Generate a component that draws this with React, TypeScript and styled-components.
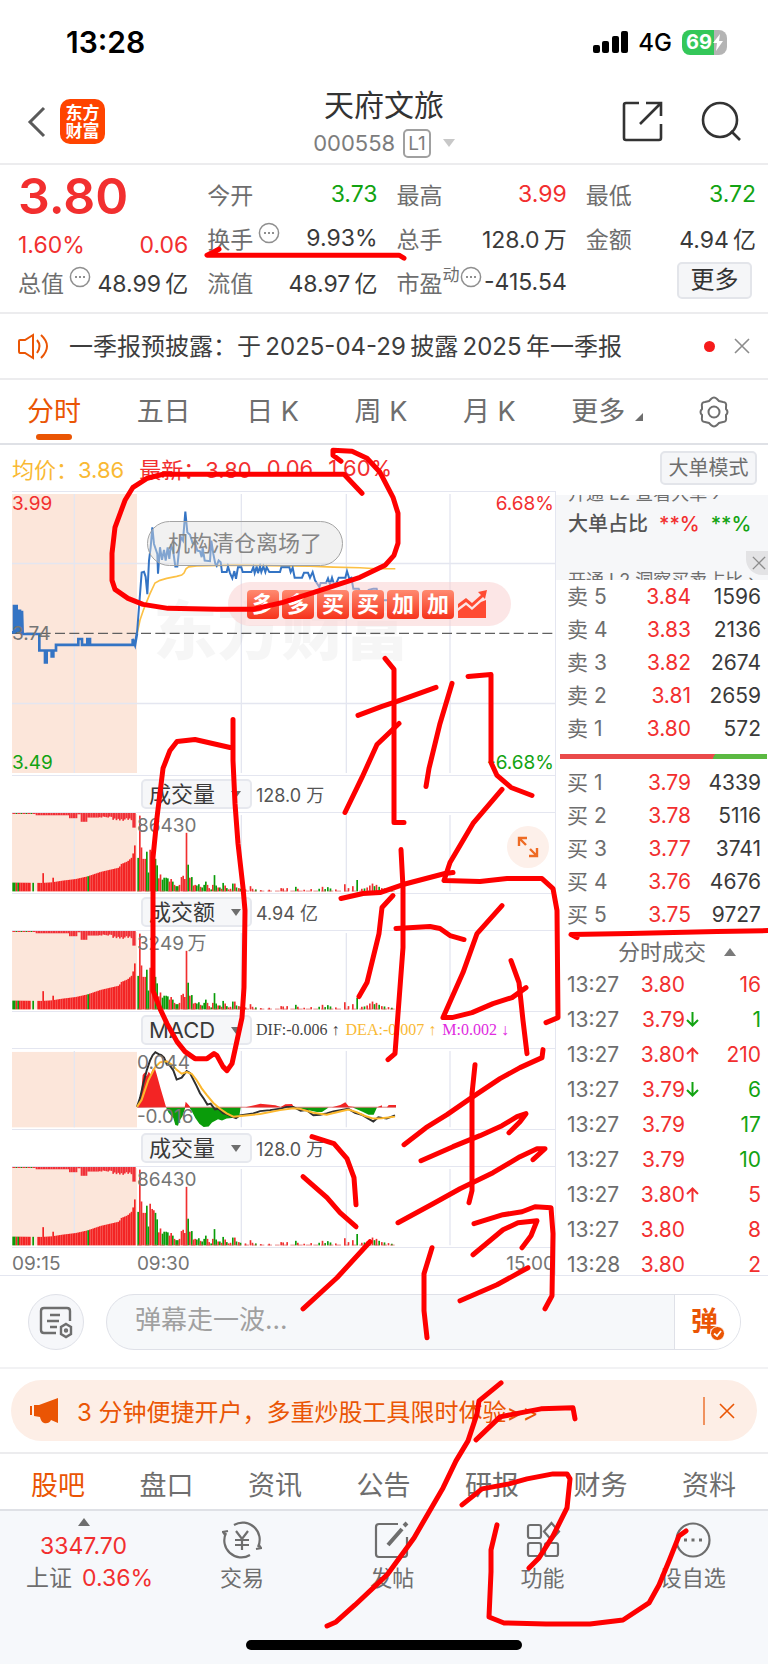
import React from "react";
import styled, { createGlobalStyle } from "styled-components";

const RED = "#f22f2f";
const GREEN = "#12a312";
const ORANGE = "#ea5504";
const GRID = "#e4e6f0";

type Tone = "red" | "green" | "dark" | "gray";
const tones: Record<Tone, string> = { red: RED, green: GREEN, dark: "#3a3a3a", gray: "#6e6e6e" };

const Global = createGlobalStyle`
  * { box-sizing: border-box; }
  body { margin: 0; background: #fff; }
  body, button, input, select {
    font-family: Inter, "Noto Sans CJK SC", sans-serif;
    color: #6e6e6e;
  }
  button { border: 0; padding: 0; margin: 0; background: none; cursor: pointer; }
  a { color: inherit; text-decoration: none; }
  svg { display: block; }
`;

const Page = styled.div`
  position: relative;
  width: 100%;
  overflow: hidden;
  background: #fff;
`;

/* ---------- status bar ---------- */
const StatusBar = styled.div`
  display: flex;
  justify-content: space-between;
  align-items: center;
  height: 84px;
  padding: 0 41px 0 66px;
  color: #000;
`;
const Clock = styled.time`
  font-size: 30px;
  font-weight: 600;
`;
const StatusIcons = styled.div`
  display: flex;
  align-items: center;
  gap: 10px;
  font-size: 24px;
  font-weight: 500;
`;
const Battery = styled.div`
  display: flex;
  align-items: center;
  justify-content: center;
  gap: 1px;
  width: 45px;
  height: 25px;
  border-radius: 8px;
  background: linear-gradient(to right, #34c759 71%, #b4b4b4 71%);
  color: #fff;
  font-size: 20px;
  font-weight: 700;
`;

/* ---------- title bar ---------- */
const TitleBar = styled.header`
  display: grid;
  grid-template-columns: 1fr auto 1fr;
  align-items: center;
  height: 81px;
  padding: 0 26px 4px;
  border-bottom: 2px solid #ececee;
`;
const TitleLeft = styled.div`
  display: flex;
  align-items: center;
  gap: 13px;
`;
const TitleRight = styled.div`
  display: flex;
  justify-content: flex-end;
  gap: 38px;
`;
const Logo = styled.a`
  display: flex;
  align-items: center;
  justify-content: center;
  width: 45px;
  height: 45px;
  border-radius: 10px;
  background: #ff4400;
  color: #fff;
  font-size: 17px;
  line-height: 18px;
  font-weight: 700;
  text-align: center;
`;
const TitleCenter = styled.div`
  display: flex;
  flex-direction: column;
  align-items: center;
  gap: 3px;
`;
const StockName = styled.h1`
  margin: 0;
  font-size: 30px;
  line-height: 40px;
  font-weight: 400;
  color: #333;
`;
const StockCode = styled.div`
  display: flex;
  align-items: center;
  gap: 8px;
  font-size: 22px;
  line-height: 30px;
  color: #7d7d7d;
`;
const LevelTag = styled.span`
  padding: 0 3px;
  border: 2px solid #a0a0a0;
  border-radius: 5px;
  font-size: 19px;
  line-height: 25px;
`;
const Caret = styled.span<{ $up?: boolean; $tone?: string }>`
  width: 0;
  height: 0;
  margin-left: ${(p) => (p.$up ? 0 : 4)}px;
  border: 6px solid transparent;
  ${(p) => (p.$up ? "border-top-width: 0; border-bottom" : "border-bottom-width: 0; border-top")}: 8px solid ${(p) => p.$tone || "#c8c8c8"};
`;

/* ---------- quote ---------- */
const Quote = styled.section`
  display: grid;
  grid-template-columns: repeat(4, 1fr);
  column-gap: 19px;
  padding: 7px 12px 8px 18px;
  border-bottom: 2px solid #ececee;
`;
const QuoteCol = styled.div`
  display: flex;
  flex-direction: column;
`;
const BigPrice = styled.div`
  height: 57px;
  font-size: 50px;
  line-height: 48px;
  font-weight: 600;
  color: ${RED};
`;
const QuoteRow = styled.div<{ $h?: number }>`
  display: flex;
  align-items: center;
  justify-content: space-between;
  height: ${(p) => p.$h || 44}px;
  font-size: 23px;
  white-space: nowrap;
`;
const QuoteLabel = styled.span<{ $gap?: number }>`
  display: flex;
  align-items: center;
  gap: ${(p) => p.$gap ?? 5}px;
`;
const Small = styled.sup`
  align-self: flex-start;
  font-size: 17px;
  line-height: 20px;
`;
const Info = styled.button`
  align-self: flex-start;
  padding-top: 1px;
`;
const Value = styled.span<{ $tone?: Tone }>`
  color: ${(p) => tones[p.$tone || "dark"]};
`;
const MoreButton = styled.button`
  width: 75px;
  height: 37px;
  margin: 0 4px 4px auto;
  border: 2px solid #e3e5ea;
  border-radius: 5px;
  background: #f5f6f8;
  font-size: 24px;
  line-height: 32px;
  color: #333;
`;

/* ---------- notice ---------- */
const Notice = styled.section`
  display: flex;
  align-items: center;
  height: 66px;
  padding: 0 18px 0 17px;
  border-bottom: 2px solid #ececee;
`;
const NoticeText = styled.a`
  flex: 1;
  margin: 0 0 3px 18px;
  font-size: 24px;
  color: #3d3d3d;
  white-space: nowrap;
`;
const Dot = styled.span`
  width: 11px;
  height: 11px;
  margin-right: 19px;
  border-radius: 50%;
  background: #f61b1b;
`;

/* ---------- period tabs ---------- */
const PeriodTabs = styled.nav`
  display: flex;
  justify-content: space-between;
  height: 65px;
  padding: 0 39px 0 27px;
  border-bottom: 2px solid #dfe1e6;
`;
const PeriodTab = styled.button<{ $active?: boolean }>`
  display: flex;
  flex-direction: column;
  align-items: center;
  padding-top: 12px;
  font-size: 27px;
  line-height: 40px;
  color: ${(p) => (p.$active ? ORANGE : "#6e6e6e")};
  &::after {
    content: "";
    width: 36px;
    height: 6px;
    margin-top: 2px;
    border-radius: 3px;
    background: ${(p) => (p.$active ? ORANGE : "transparent")};
  }
`;
const Corner = styled.span`
  display: inline-block;
  margin-left: 10px;
  border: 4px solid transparent;
  border-right-color: #6e6e6e;
  border-bottom-color: #6e6e6e;
`;

/* ---------- market area ---------- */
const Legend = styled.div`
  display: flex;
  align-items: center;
  height: 46px;
  padding: 0 11px 0 12px;
  font-size: 22px;
  white-space: pre;
`;
const LegendItem = styled.span<{ $color: string }>`
  margin-right: 15px;
  color: ${(p) => p.$color};
`;
const ModeButton = styled.button`
  margin-left: auto;
  width: 97px;
  height: 34px;
  border: 2px solid #e3e5ea;
  border-radius: 5px;
  background: #f5f6f8;
  font-size: 20px;
  line-height: 28px;
`;
const Market = styled.div`
  display: grid;
  grid-template-columns: minmax(0, 1fr) 212px;
`;
const Charts = styled.div`
  padding-left: 12px;
  border-bottom: 1px solid ${GRID};
`;
const Plot = styled.div<{ $h: number }>`
  position: relative;
  height: ${(p) => p.$h}px;
  border: 0 solid ${GRID};
  border-width: 1px 1px 1px 0;
  & > svg { width: 100%; height: 100%; }
`;
const PlotLabel = styled.span<{ $top: string; $left?: string; $right?: string; $color?: string }>`
  position: absolute;
  top: ${(p) => p.$top};
  left: ${(p) => p.$left || "auto"};
  right: ${(p) => p.$right || "auto"};
  font-size: 19px;
  line-height: 22px;
  color: ${(p) => p.$color || "#757575"};
`;
const Watermark = styled.span`
  position: absolute;
  left: 26%;
  top: 94px;
  font-size: 64px;
  line-height: 90px;
  font-weight: 900;
  color: rgba(0, 0, 0, 0.035);
  white-space: nowrap;
`;
const Bullet = styled.span`
  position: absolute;
  left: 135px;
  top: 29px;
  width: 196px;
  height: 45px;
  border: 1px solid #a4a4a4;
  border-radius: 23px;
  background: rgba(225, 225, 225, 0.45);
  color: #858585;
  font-size: 22px;
  line-height: 43px;
  text-align: center;
`;
const Cheer = styled.span`
  position: absolute;
  left: 216px;
  top: 90px;
  display: flex;
  align-items: center;
  gap: 3px;
  height: 44px;
  padding: 0 23px 0 19px;
  border-radius: 22px;
  background: rgba(250, 205, 205, 0.5);
`;
const CheerTile = styled.b`
  width: 32px;
  height: 29px;
  border-radius: 4px;
  background: linear-gradient(#ff8a70, #f6321a);
  color: #fff;
  font-size: 22px;
  line-height: 28px;
  text-align: center;
`;
const ExpandButton = styled.button`
  position: absolute;
  right: 6px;
  top: 13px;
  display: flex;
  align-items: center;
  justify-content: center;
  width: 42px;
  height: 42px;
  border-radius: 50%;
  background: #fdf0ea;
`;
const IndicatorRow = styled.div`
  display: flex;
  align-items: center;
  gap: 4px;
  height: 36px;
  padding-left: 129px;
  border-right: 1px solid ${GRID};
  font-size: 18px;
  white-space: nowrap;
  color: #555;
`;
const SelectBox = styled.label`
  display: flex;
  align-items: center;
  width: 111px;
  height: 30px;
  padding-right: 9px;
  border: 2px solid #e6e8ee;
  border-radius: 5px;
  background: #f6f7f9;
`;
const Select = styled.select`
  flex: 1;
  min-width: 0;
  height: 26px;
  padding: 0 0 0 6px;
  border: 0;
  background: none;
  appearance: none;
  font-size: 22px;
  line-height: 26px;
  color: #3a3a3a;
`;
const SelectCaret = styled.span`
  border: 5px solid transparent;
  border-bottom-width: 0;
  border-top: 7px solid #6e6e6e;
`;
const Macd = styled.span<{ $color: string }>`
  margin-right: 2px;
  font-family: "Liberation Serif", serif;
  font-size: 16px;
  color: ${(p) => p.$color};
`;
const Axis = styled.div`
  display: flex;
  height: 27px;
  border-right: 1px solid ${GRID};
  font-size: 19px;
  line-height: 32px;
  color: #757575;
`;
const AxisStart = styled.span`
  width: 23%;
`;
const AxisEnd = styled.span`
  margin-left: auto;
`;

/* ---------- order book ---------- */
const Side = styled.aside`
  padding: 4px 0 0;
  border-bottom: 1px solid ${GRID};
`;
const Promo = styled.div`
  position: relative;
  display: flex;
  flex-direction: column;
  height: 85px;
  padding-left: 12px;
  overflow: hidden;
  background: #f6f7f9;
`;
const PromoClip = styled.a<{ $bottom?: boolean }>`
  display: flex;
  align-items: ${(p) => (p.$bottom ? "flex-start" : "flex-end")};
  height: 9px;
  overflow: hidden;
  font-size: 18px;
  line-height: 20px;
  white-space: nowrap;
`;
const PromoTitle = styled.div`
  display: flex;
  gap: 11px;
  height: 40px;
  margin-bottom: auto;
  font-size: 20px;
  line-height: 40px;
  font-weight: 500;
  color: #555;
`;
const PromoClose = styled.button`
  position: absolute;
  right: 0;
  top: 56px;
  width: 22px;
  height: 24px;
  padding-left: 6px;
  border-radius: 0 0 0 16px;
  background: #e3e3e5;
`;
const Book = styled.table<{ $row: number; $label: number }>`
  width: 100%;
  border-collapse: collapse;
  table-layout: fixed;
  font-size: 21px;
  td, th {
    height: ${(p) => p.$row}px;
    padding: 0;
    font-weight: 400;
    line-height: 24px;
    white-space: nowrap;
  }
  th { width: ${(p) => p.$label}px; padding-left: 11px; text-align: left; }
  td:nth-child(2) { width: 58px; text-align: right; }
  td:last-child { padding-right: 7px; text-align: right; }
`;
const Trades = styled(Book)`
  margin-bottom: -7px;
`;
const BalanceBar = styled.div`
  height: 5px;
  margin: 9px 1px 7px 4px;
  background: linear-gradient(115deg, #ea4a4a 74%, #5bb942 74%);
`;
const TradesTitle = styled.button`
  display: flex;
  align-items: center;
  gap: 18px;
  width: 100%;
  height: 36px;
  padding: 6px 0 0 62px;
  font-size: 22px;
  line-height: 30px;
`;
const Tick = styled.span<{ $tone: Tone }>`
  display: inline-block;
  width: 14px;
  margin-right: -14px;
  color: ${(p) => tones[p.$tone]};
  svg { display: inline-block; }
`;

/* ---------- comment box ---------- */
const CommentBar = styled.form`
  display: flex;
  align-items: center;
  gap: 22px;
  height: 93px;
  padding: 0 27px 0 28px;
  border-bottom: 2px solid #f2f2f4;
`;
const RoundButton = styled.button`
  display: flex;
  align-items: center;
  justify-content: center;
  width: 56px;
  height: 56px;
  border: 1px solid #dfe1e8;
  border-radius: 50%;
  background: #f6f7fa;
`;
const CommentField = styled.div`
  display: flex;
  flex: 1;
  height: 56px;
  border: 1px solid #dfe1e8;
  border-radius: 28px;
  background: #f6f8fa;
  overflow: hidden;
`;
const CommentInput = styled.input`
  flex: 1;
  min-width: 0;
  padding: 0 28px 4px;
  border: 0;
  background: none;
  font-size: 26px;
  &::placeholder { color: #a0a0a0; opacity: 1; }
`;
const BulletToggle = styled.button`
  position: relative;
  width: 66px;
  border-left: 1px solid #dfe1e8;
  background: #fff;
  color: ${ORANGE};
  font-size: 27px;
  font-weight: 700;
  line-height: 50px;
  text-align: left;
  padding-left: 16px;
  svg { position: absolute; left: 35px; top: 31px; }
`;

/* ---------- banner ---------- */
const BannerWrap = styled.section`
  padding: 11px;
  border-bottom: 2px solid #ececee;
`;
const Banner = styled.div`
  display: flex;
  align-items: center;
  height: 61px;
  padding: 0 22px 0 18px;
  border-radius: 31px;
  background: #fdeee6;
  color: ${ORANGE};
`;
const BannerText = styled.a`
  flex: 1;
  margin-left: 18px;
  font-size: 24px;
  white-space: nowrap;
`;
const BannerClose = styled.button`
  padding: 6px 0 6px 14px;
  border-left: 2px solid #f0925f;
`;

/* ---------- section tabs and bottom bar ---------- */
const SectionTabs = styled.nav`
  display: flex;
  justify-content: space-between;
  height: 57px;
  padding: 0 32px 0 31px;
  border-bottom: 2px solid #dfe1e6;
`;
const SectionTab = styled.a<{ $active?: boolean }>`
  padding-top: 12px;
  font-size: 27px;
  line-height: 40px;
  color: ${(p) => (p.$active ? ORANGE : "#6e6e6e")};
`;
const BottomBar = styled.footer`
  padding: 7px 0 15px;
  background: #f6f8fb;
`;
const BottomItems = styled.div`
  display: grid;
  grid-template-columns: 167px repeat(4, 1fr);
  height: 122px;
`;
const IndexCell = styled.a`
  display: flex;
  flex-direction: column;
  align-items: center;
  gap: 8px;
  font-size: 23px;
  line-height: 24px;
`;
const IndexLine = styled.span`
  display: flex;
  gap: 10px;
  padding-left: 12px;
`;
const NavButton = styled.button`
  display: flex;
  flex-direction: column;
  align-items: center;
  gap: 3px;
  padding-top: 3px;
  font-size: 22px;
  line-height: 32px;
`;
const HomeBar = styled.div`
  width: 36%;
  height: 10px;
  margin: 0 auto;
  border-radius: 5px;
  background: #000;
`;

const Doodle = styled.svg`
  position: absolute;
  inset: 0;
  width: 100%;
  height: 100%;
  pointer-events: none;
`;

/* ---------- icons ---------- */
const Cross = ({ size = 16, color = "#8c8c8c" }: { size?: number; color?: string }) => (
  <svg width={size} height={size} viewBox="0 0 16 16" fill="none" stroke={color} strokeWidth="1.6">
    <path d="M1 1L15 15M15 1L1 15" />
  </svg>
);
const MoreInfo = () => (
  <Info aria-label="说明">
    <svg width="22" height="22" viewBox="0 0 22 22" fill="none" stroke="#8f8f8f" strokeWidth="1.5">
      <circle cx="11" cy="11" r="9.6" />
      <path d="M6 11h2M10 11h2M14 11h2" strokeWidth="2" />
    </svg>
  </Info>
);

/* ---------- chart drawings ---------- */
const VLines = ({ h }: { h: number }) => (
  <path d={`M187 6V${h}M688 6V${h}M1003 6V${h}M1314 6V${h}`} stroke={GRID} strokeWidth="4" fill="none" />
);

const PRE_LINE =
  "0,424 6,424 6,345 14,345 14,422 18,422 18,359 24,359 24,424 30,424 30,359 32,429 82,429 82,479 99,479 99,515 104,515 104,479 119,479 119,497 124,497 124,479 132,479 132,462 199,462 199,444 210,444 210,462 226,462 226,444 234,444 234,462 362,462 362,444 369,462 375,427";
const PRICE_LINE =
  "375,427 389,243 396,241 401,257 406,309 411,207 416,167 421,107 426,157 436,187 438,247 444,167 450,205 456,175 461,207 467,167 472,202 477,157 484,182 490,225 496,225 502,167 507,137 513,147 520,59 526,122 534,129 542,155 550,157 556,177 564,179 569,197 572,167 578,207 594,209 598,147 604,187 610,217 614,223 620,207 626,212 630,242 644,242 648,225 654,245 661,261 667,239 672,262 678,227 688,227 692,242 718,242 724,227 728,245 734,225 738,245 744,225 748,242 754,225 760,242 764,227 772,242 804,242 808,227 832,227 836,242 842,229 848,259 870,259 876,244 888,244 894,259 902,242 909,267 922,287 926,275 942,275 948,261 954,279 960,259 966,279 974,273 980,259 1000,259 1005,239 1012,262 1018,259 1024,292 1040,292 1048,310 1062,308 1070,296 1084,292 1094,292 1100,318 1110,327 1134,327";
const AVG_LINE =
  "375,429 384,387 394,357 404,332 414,307 429,275 444,267 464,261 494,255 509,251 516,245 522,232 530,226 554,223 664,221 814,223 894,224 964,227 1044,229 1094,232 1150,232";

const PriceDrawing = () => (
  <svg viewBox="0 0 1629 855" preserveAspectRatio="none" fill="none">
    <rect x="0" y="6" width="375" height="843" fill="#fce6da" />
    <path d="M0 216H1629M0 639H1629" stroke={GRID} strokeWidth="4" />
    <VLines h={849} />
    <path d="M0 427H1629" stroke="#606060" strokeWidth="4" strokeDasharray="30 13" />
    <polyline points={AVG_LINE} stroke="#fcc044" strokeWidth="5" />
    <polyline points={PRE_LINE} stroke="#3474c4" strokeWidth="8" />
    <polyline points={PRICE_LINE} stroke="#3474c4" strokeWidth="6" />
  </svg>
);

// [x, height, colour] of the bars traded after the open
const OPEN_BARS: [number, number, string][] = [
  [377, 103, "g"], [382, 233, "r"], [387, 135, "r"], [392, 100, "r"], [398, 100, "r"], [403, 122, "g"], [408, 58, "g"],
  [413, 128, "r"], [419, 112, "r"], [424, 108, "r"], [429, 100, "g"], [434, 80, "g"], [439, 40, "r"], [444, 52, "r"],
  [450, 36, "g"], [455, 42, "g"], [461, 42, "g"], [466, 40, "g"], [471, 30, "r"], [476, 38, "r"], [481, 30, "g"],
  [486, 20, "r"], [491, 16, "g"], [496, 16, "g"], [501, 20, "r"], [507, 44, "r"], [512, 48, "r"], [517, 38, "r"],
  [522, 180, "r"], [527, 82, "g"], [532, 42, "r"], [538, 44, "g"], [543, 18, "r"], [548, 20, "r"], [553, 18, "g"],
  [559, 22, "g"], [564, 14, "r"], [569, 12, "g"], [575, 20, "g"], [580, 30, "g"], [585, 20, "r"], [590, 10, "r"],
  [596, 6, "g"], [601, 20, "r"], [606, 50, "g"], [611, 18, "g"], [617, 12, "r"], [622, 12, "g"], [627, 8, "r"],
  [632, 26, "g"], [638, 18, "r"], [643, 10, "g"], [648, 6, "r"], [654, 8, "r"], [661, 24, "g"], [667, 24, "r"],
  [672, 12, "g"], [679, 10, "r"], [684, 8, "g"], [699, 6, "r"], [714, 16, "r"], [720, 8, "r"], [730, 6, "g"],
  [745, 4, "r"], [770, 5, "r"], [806, 10, "r"], [812, 9, "r"], [824, 10, "r"], [850, 14, "g"], [856, 8, "r"],
  [875, 5, "r"], [896, 7, "r"], [920, 8, "g"], [930, 14, "r"], [938, 7, "g"], [946, 13, "g"], [954, 9, "g"],
  [970, 6, "r"], [997, 22, "r"], [1008, 10, "r"], [1021, 16, "r"], [1034, 35, "g"], [1048, 8, "r"], [1056, 9, "g"],
  [1064, 12, "r"], [1072, 18, "r"], [1080, 24, "r"], [1086, 16, "g"], [1092, 20, "r"], [1100, 14, "g"],
  [1108, 10, "r"], [1116, 9, "g"], [1128, 7, "r"], [1138, 5, "g"],
];
const PRE_SHAPE: [number, number][] = [
  [0, 27], [90, 26], [120, 28], [150, 33], [190, 38], [225, 46], [265, 60], [320, 73], [326, 84], [345, 92], [360, 106],
  [366, 138], [372, 158],
];
const preHeight = (x: number) => {
  for (let i = 1; i < PRE_SHAPE.length; i++) {
    const [x1, h1] = PRE_SHAPE[i];
    const [x0, h0] = PRE_SHAPE[i - 1];
    if (x <= x1) return h0 + ((h1 - h0) * (x - x0)) / (x1 - x0);
  }
  return 158;
};
const topHeight = (x: number) => {
  if (x < 72) return x % 24 ? 3 : 6;
  if (x < 168) return 5 + (x % 5);
  if (x < 194) return 16;
  if (x < 206) return 4;
  if (x < 226) return 27;
  if (x < 262) return 14;
  if (x < 300) return 11 + (x % 4);
  if (x < 362) return 16 + (x % 9);
  return 45;
};
const PRE_XS = Array.from({ length: 74 }, (_, i) => 2 + i * 5);

const VolumeDrawing = () => (
  <svg viewBox="0 0 1629 246" preserveAspectRatio="none">
    <rect x="0" y="3" width="375" height="238" fill="#fce6da" />
    <VLines h={241} />
    {PRE_XS.filter((x) => x < 54 || x > 72 || x === 62).map((x) => {
      const green = x < 22 ? x % 3 !== 0 : x === 62 || x === 72 || x === 227;
      const h = x > 90 && x < 95 ? 56 : x > 118 && x < 124 ? 42 : preHeight(x);
      return <rect key={x} x={x - 1} y={241 - h} width="5" height={h} fill={green ? "#0a9c0a" : "#f32424"} />;
    })}
    {PRE_XS.map((x) => (
      <rect key={x} x={x - 1} y="0" width="5" height={topHeight(x)} fill={x < 72 && x % 3 === 0 ? "#0a9c0a" : "#f03038"} />
    ))}
    {OPEN_BARS.map(([x, h, c]) => (
      <rect key={x} x={x - 1} y={241 - h} width="5" height={h} fill={c === "g" ? "#0a9c0a" : "#f03030"} />
    ))}
    <path d="M375 240H1150" stroke="#e05050" strokeWidth="2" strokeDasharray="14 9" />
  </svg>
);

const MacdDrawing = () => (
  <svg viewBox="0 0 1629 246" preserveAspectRatio="none" fill="none">
    <rect x="0" y="9" width="375" height="232" fill="#fce6da" />
    <VLines h={241} />
    <path
      d="M378 180L386 150L392 80L398 72L404 84L410 70L416 78L422 62L428 58L434 78L440 100L446 122L454 150L462 178Z M518 180L521 162L530 172L536 180Z M700 179L730 172L745 168L760 170L790 173L806 178L820 170L840 169L846 179Z M960 179L985 172L1000 164L1010 176L1035 179Z M1095 179L1110 173V179H1125L1130 172H1152V179Z"
      fill="#f32424"
    />
    <path
      d="M462 180H520L512 205L502 222L498 236L490 234L484 212L470 196Z M532 180H686L682 206L660 212L644 214L630 220L618 216L600 226L590 238L575 240L562 230L550 212L540 192Z M850 180H950L930 194L915 194L890 188Z M1022 180H1095L1085 202L1070 202L1050 192Z"
      fill="#0a9c0a"
    />
    <path d="M375 179H1152" stroke="#d04040" strokeWidth="2" />
    <polyline
      points="375,178 384,151 394,106 404,66 414,36 422,19 430,10 440,16 448,19 456,26 464,46 474,51 484,66 494,94 509,88 524,68 534,74 544,94 554,114 564,136 576,154 586,171 596,168 609,186 619,184 634,198 644,200 654,206 672,213 684,204 724,198 744,191 774,188 804,184 824,178 844,178 866,190 884,188 904,204 924,202 944,198 964,192 1009,184 1029,196 1049,202 1069,214 1084,223 1099,210 1124,214 1149,204"
      stroke="#2f2f2f"
      strokeWidth="6"
    />
    <polyline
      points="375,178 389,156 409,96 429,56 444,41 464,38 479,48 494,64 509,76 524,71 539,76 554,96 569,121 584,141 604,166 624,184 644,198 664,208 694,205 744,200 804,188 844,182 864,184 904,196 944,202 984,192 1009,186 1034,194 1059,206 1084,214 1109,213 1149,208"
      stroke="#fcb82e"
      strokeWidth="6"
    />
  </svg>
);

/* ---------- data ---------- */
const asks = [["卖 5", "3.84", "1596"], ["卖 4", "3.83", "2136"], ["卖 3", "3.82", "2674"], ["卖 2", "3.81", "2659"], ["卖 1", "3.80", "572"]];
const bids = [["买 1", "3.79", "4339"], ["买 2", "3.78", "5116"], ["买 3", "3.77", "3741"], ["买 4", "3.76", "4676"], ["买 5", "3.75", "9727"]];
const trades: [string, string, "" | "up" | "down", string, Tone][] = [
  ["13:27", "3.80", "", "16", "red"],
  ["13:27", "3.79", "down", "1", "green"],
  ["13:27", "3.80", "up", "210", "red"],
  ["13:27", "3.79", "down", "6", "green"],
  ["13:27", "3.79", "", "17", "green"],
  ["13:27", "3.79", "", "10", "green"],
  ["13:27", "3.80", "up", "5", "red"],
  ["13:27", "3.80", "", "8", "red"],
  ["13:28", "3.80", "", "2", "red"],
];

const STROKES = [
  "M219 249L207 255H399L404 258",
  "M341 461L333 455V450L352 451L367 458L380 472L393 497L398 513V543L394 555L385 565L360 577L317 591L283 602L253 609H217L168 608L143 604L128 598L115 589L112 580V553L115 527L125 500L133 487L147 478L163 474H344L362 493",
  "M233 719V760L235 803L238 843L243 887L245 910L244 987L242 1017L237 1040L232 1063L227 1070L223 1066L217 1055L214 1053L207 1058H195L185 1051L177 1041L167 1023L160 1008L153 990V857L157 817L163 768L170 750L177 741L195 739L230 747",
  "M385 658L394 669V822H404",
  "M358 715L382 706L397 701L436 687",
  "M399 723L377 744L362 777L345 812",
  "M452 683L440 723L429 768L426 786",
  "M468 676L491 674V762L497 775L511 787L532 795",
  "M502 789L473 823L450 862L444 880L480 881L507 878H542L553 888L557 910L558 1017L546 1022",
  "M341 898L363 893L380 892L403 884L445 873L453 872",
  "M401 849L403 887V947L395 1053L388 1059",
  "M393 895L382 907L379 933L367 982L359 996",
  "M396 928L430 926L440 928L450 935L464 939",
  "M502 905L477 933L463 972L443 1017H452L472 1012L493 1003L512 997L526 987",
  "M511 960L519 982L523 1020L527 1053",
  "M312 1136L334 1143L347 1158L354 1177L356 1204",
  "M303 1176L327 1197L340 1212L356 1226",
  "M370 1241L337 1277L303 1308",
  "M543 1049L542 1057L520 1067L500 1078L473 1096L447 1114L426 1127L404 1144",
  "M475 1064L472 1093V1190L469 1202",
  "M421 1160L453 1146L480 1135L502 1125L517 1116L526 1113L520 1121L509 1132",
  "M398 1222L433 1203L460 1188L493 1172L520 1156L537 1148H545L533 1159",
  "M474 1223L503 1214L522 1211L535 1206L551 1207L553 1233L552 1295L545 1308",
  "M473 1254L503 1229L518 1222L537 1220L531 1235L522 1247",
  "M460 1300L497 1284L528 1267",
  "M432 1247L424 1273V1310L427 1337",
  "M501 1382L479 1400L477 1413L468 1440L456 1460L443 1487L414 1537L387 1574L355 1604L336 1621L327 1625",
  "M476 1439L500 1416L541 1408L573 1407L575 1418",
  "M462 1504L482 1488L509 1483L527 1478L553 1473H567L570 1478L567 1507L553 1535L539 1557L529 1567",
  "M497 1524L491 1549V1571L489 1616L504 1622L546 1623H590L623 1619L649 1602L659 1584L669 1560L679 1535L686 1530",
  "M577 937L571 934L630 933L717 931L768 930",
];

const BookRows = ({ rows, label }: { rows: string[][]; label: string }) => (
  <Book $row={33} $label={77} aria-label={label}>
    <tbody>
      {rows.map(([name, price, amount]) => (
        <tr key={name}>
          <th scope="row">{name}</th>
          <td><Value $tone="red">{price}</Value></td>
          <td><Value>{amount}</Value></td>
        </tr>
      ))}
    </tbody>
  </Book>
);

const Indicator = ({ value, children }: { value: string; children?: React.ReactNode }) => (
  <IndicatorRow>
    <SelectBox>
      <Select defaultValue={value} aria-label="指标">
        <option>成交量</option>
        <option>成交额</option>
        <option>MACD</option>
      </Select>
      <SelectCaret />
    </SelectBox>
    {children}
  </IndicatorRow>
);

export default function App() {
  return (
    <>
      <Global />
      <Page>
        <StatusBar>
          <Clock>13:28</Clock>
          <StatusIcons>
            <svg width="35" height="22" viewBox="0 0 35 22">
              <rect x="0" y="14" width="7" height="8" rx="2" />
              <rect x="9" y="10" width="7" height="12" rx="2" />
              <rect x="19" y="5" width="7" height="17" rx="2" />
              <rect x="28" y="0" width="7" height="22" rx="2" />
            </svg>
            4G
            <Battery>
              69
              <svg width="10" height="17" viewBox="0 0 10 17" fill="#fff"><path d="M7 0L0 9H4L3 17L10 7H6Z" /></svg>
            </Battery>
          </StatusIcons>
        </StatusBar>

        <TitleBar>
          <TitleLeft>
            <button aria-label="返回">
              <svg width="21" height="32" viewBox="0 0 21 32" fill="none" stroke="#5a5a5a" strokeWidth="3"><path d="M18 2L4 16L18 30" /></svg>
            </button>
            <Logo href="#">东方<br />财富</Logo>
          </TitleLeft>
          <TitleCenter>
            <StockName>天府文旅</StockName>
            <StockCode>
              000558<LevelTag>L1</LevelTag><Caret />
            </StockCode>
          </TitleCenter>
          <TitleRight>
            <button aria-label="分享">
              <svg width="41" height="41" viewBox="0 0 41 41" fill="none" stroke="#333" strokeWidth="2.6">
                <path d="M17 2H4Q2 2 2 4V37Q2 39 4 39H37Q39 39 39 37V23M24 2H39V15M39 2L18 23" />
              </svg>
            </button>
            <button aria-label="搜索">
              <svg width="41" height="41" viewBox="0 0 41 41" fill="none" stroke="#333" strokeWidth="2.6">
                <circle cx="19" cy="19" r="17" /><path d="M30 30L39 39" />
              </svg>
            </button>
          </TitleRight>
        </TitleBar>

        <Quote>
          <QuoteCol>
            <BigPrice>3.80</BigPrice>
            <QuoteRow $h={31}><Value $tone="red">1.60%</Value><Value $tone="red">0.06</Value></QuoteRow>
            <QuoteRow><QuoteLabel>总值<MoreInfo /></QuoteLabel><Value>48.99{"\u2009"}亿</Value></QuoteRow>
          </QuoteCol>
          <QuoteCol>
            <QuoteRow>今开<Value $tone="green">3.73</Value></QuoteRow>
            <QuoteRow><QuoteLabel>换手<MoreInfo /></QuoteLabel><Value>9.93%</Value></QuoteRow>
            <QuoteRow>流值<Value>48.97{"\u2009"}亿</Value></QuoteRow>
          </QuoteCol>
          <QuoteCol>
            <QuoteRow>最高<Value $tone="red">3.99</Value></QuoteRow>
            <QuoteRow>总手<Value>128.0{"\u2009"}万</Value></QuoteRow>
            <QuoteRow><QuoteLabel $gap={0}>市盈<Small>动</Small><MoreInfo /></QuoteLabel><Value>-415.54</Value></QuoteRow>
          </QuoteCol>
          <QuoteCol>
            <QuoteRow>最低<Value $tone="green">3.72</Value></QuoteRow>
            <QuoteRow>金额<Value>4.94{"\u2009"}亿</Value></QuoteRow>
            <QuoteRow><MoreButton>更多</MoreButton></QuoteRow>
          </QuoteCol>
        </Quote>

        <Notice>
          <svg width="34" height="27" viewBox="0 0 34 27" fill="none" stroke={ORANGE} strokeWidth="2">
            <path d="M16 2L8 7H3Q2 7 2 8V18Q2 20 3 20H8L16 25Z M20 7Q25 13 20 20 M24 2Q36 13 24 25" />
          </svg>
          <NoticeText href="#">一季报预披露：于{"\u2009"}2025-04-29{"\u2009"}披露{"\u2009"}2025{"\u2009"}年一季报</NoticeText>
          <Dot />
          <button aria-label="关闭公告"><Cross /></button>
        </Notice>

        <PeriodTabs>
          <PeriodTab $active>分时</PeriodTab>
          <PeriodTab>五日</PeriodTab>
          <PeriodTab>日 K</PeriodTab>
          <PeriodTab>周 K</PeriodTab>
          <PeriodTab>月 K</PeriodTab>
          <PeriodTab><span>更多<Corner /></span></PeriodTab>
          <button aria-label="设置">
            <svg width="30" height="32" viewBox="0 0 30 32" fill="none" stroke="#6e6e6e" strokeWidth="2">
              <path d="M12 3Q15 0 18 3L20 5L24 6Q28 6 27 11V13Q30 16 27 19V21Q28 26 24 26L20 27L18 29Q15 32 12 29L10 27L6 26Q2 26 3 21V19Q0 16 3 13V11Q2 6 6 6L10 5Z" />
              <circle cx="15" cy="16" r="5.5" />
            </svg>
          </button>
        </PeriodTabs>

        <Legend>
          <LegendItem $color="#f9b934">均价：3.86</LegendItem>
          <LegendItem $color={RED}>最新：3.80</LegendItem>
          <LegendItem $color={RED}>0.06</LegendItem>
          <LegendItem $color={RED}>1.60%</LegendItem>
          <ModeButton>大单模式</ModeButton>
        </Legend>

        <Market>
          <Charts>
            <Plot $h={285}>
              <Watermark>东方财富</Watermark>
              <PriceDrawing />
              <PlotLabel $top="1px" $left="0" $color={RED}>3.99</PlotLabel>
              <PlotLabel $top="1px" $right="1px" $color={RED}>6.68%</PlotLabel>
              <PlotLabel $top="131px" $left="0">3.74</PlotLabel>
              <PlotLabel $top="260px" $left="0" $color={GREEN}>3.49</PlotLabel>
              <PlotLabel $top="260px" $right="1px" $color={GREEN}>-6.68%</PlotLabel>
              <Bullet>机构清仓离场了</Bullet>
              <Cheer>
                {["多", "多", "买", "买", "加", "加"].map((c, i) => <CheerTile key={i}>{c}</CheerTile>)}
                <svg width="31" height="30" viewBox="0 0 31 30" fill="#ff4b32">
                  <path d="M1 29V22L9 16L15 21L24 13L29 11V29Z" />
                  <path d="M1 15L9 9L15 14L24 6L21 3L30 1L28 10L26 8L15 18L9 13L1 19Z" />
                </svg>
              </Cheer>
            </Plot>
            <Indicator value="成交量">128.0 万</Indicator>
            <Plot $h={82}>
              <VolumeDrawing />
              <PlotLabel $top="2px" $left="23%">86430</PlotLabel>
              <ExpandButton aria-label="全屏">
                <svg width="22" height="22" viewBox="0 0 22 22" fill="none" stroke="#ee6b24" strokeWidth="2.4">
                  <path d="M2 10V2H10M2 2L9 9M20 12V20H12M20 20L13 13" />
                </svg>
              </ExpandButton>
            </Plot>
            <Indicator value="成交额">4.94 亿</Indicator>
            <Plot $h={82}>
              <VolumeDrawing />
              <PlotLabel $top="2px" $left="23%">3249{"\u2009"}万</PlotLabel>
            </Plot>
            <Indicator value="MACD">
              <Macd $color="#444">DIF:-0.006 ↑</Macd>
              <Macd $color="#f9b934">DEA:-0.007 ↑</Macd>
              <Macd $color="#e02be0">M:0.002 ↓</Macd>
            </Indicator>
            <Plot $h={82}>
              <MacdDrawing />
              <PlotLabel $top="3px" $left="23%">0.044</PlotLabel>
              <PlotLabel $top="57px" $left="23%">-0.016</PlotLabel>
            </Plot>
            <Indicator value="成交量">128.0 万</Indicator>
            <Plot $h={82}>
              <VolumeDrawing />
              <PlotLabel $top="2px" $left="23%">86430</PlotLabel>
            </Plot>
            <Axis>
              <AxisStart>09:15</AxisStart>
              <span>09:30</span>
              <AxisEnd>15:00</AxisEnd>
            </Axis>
          </Charts>

          <Side>
            <Promo>
              <PromoClip href="#">开通 L2 查看大单 ›</PromoClip>
              <PromoTitle>
                大单占比<Value $tone="red">**%</Value><Value $tone="green">**%</Value>
              </PromoTitle>
              <PromoClip href="#" $bottom>开通 L2 洞察买卖占比 ›</PromoClip>
              <PromoClose aria-label="关闭"><Cross size={14} /></PromoClose>
            </Promo>
            <BookRows rows={asks} label="卖盘" />
            <BalanceBar />
            <BookRows rows={bids} label="买盘" />
            <TradesTitle>分时成交<Caret $up $tone="#7a7a7a" /></TradesTitle>
            <Trades $row={35} $label={71} aria-label="分时成交">
              <tbody>
                {trades.map(([time, price, dir, amount, tone], i) => (
                  <tr key={i}>
                    <th scope="row">{time}</th>
                    <td>
                      <Value $tone="red">{price}</Value>
                      {dir && (
                        <Tick $tone={dir === "up" ? "red" : "green"}>
                          <svg width="13" height="15" viewBox="0 0 13 15" fill="none" stroke="currentColor" strokeWidth="2">
                            <path d={dir === "up" ? "M6.5 15V2M1 7L6.500 1.500L12 7" : "M6.500 0V13M1 8L6.500 13.500L12 8"} />
                          </svg>
                        </Tick>
                      )}
                    </td>
                    <td><Value $tone={tone}>{amount}</Value></td>
                  </tr>
                ))}
              </tbody>
            </Trades>
          </Side>
        </Market>

        <CommentBar>
          <RoundButton type="button" aria-label="弹幕设置">
            <svg width="36" height="34" viewBox="0 0 36 34" fill="none" stroke="#6e6e6e" strokeWidth="2.400">
              <path d="M18 28H6Q3 28 3 25V6Q3 3 6 3H29Q32 3 32 6V16M12 10H22M9 16H21M12 22H19" />
              <path d="M28 19L33 22V29L28 32L23 29V22Z" /><circle cx="28" cy="25.500" r="1" />
            </svg>
          </RoundButton>
          <CommentField>
            <CommentInput aria-label="弹幕" placeholder="弹幕走一波..." />
            <BulletToggle type="button">
              弹
              <svg width="15" height="15" viewBox="0 0 15 15">
                <circle cx="7.500" cy="7.500" r="7" fill={ORANGE} stroke="#fff" /><path d="M4 7.500L7 10L11 5" fill="none" stroke="#fff" strokeWidth="1.800" />
              </svg>
            </BulletToggle>
          </CommentField>
        </CommentBar>

        <BannerWrap>
          <Banner>
            <svg width="30" height="26" viewBox="0 0 30 26" fill={ORANGE}>
              <path d="M1 8H3V17H1ZM5 7H10L29 0V25L22 22Q20 26 15 25Q12 24 11 19L5 18Z" />
            </svg>
            <BannerText href="#">3 分钟便捷开户，多重炒股工具限时体验&gt;&gt;</BannerText>
            <BannerClose aria-label="关闭广告"><Cross color={ORANGE} /></BannerClose>
          </Banner>
        </BannerWrap>

        <SectionTabs>
          {["股吧", "盘口", "资讯", "公告", "研报", "财务", "资料"].map((t, i) => (
            <SectionTab key={t} href="#" $active={i === 0}>{t}</SectionTab>
          ))}
        </SectionTabs>

        <BottomBar>
          <BottomItems>
            <IndexCell href="#">
              <Caret $up $tone="#6e6e6e" />
              <Value $tone="red">3347.70</Value>
              <IndexLine>上证<Value $tone="red">0.36%</Value></IndexLine>
            </IndexCell>
            <NavButton>
              <svg width="40" height="38" viewBox="0 0 40 38" fill="none" stroke="#6e6e6e" strokeWidth="2.200">
                <path d="M12 4A17 17 0 0 1 36 26M37 24L39 27L34 28M28 34A17 17 0 0 1 4 12M3 14L1 11L6 10" />
                <path d="M14 10L20 18L26 10M20 18V29M13 19H27M13 24H27" />
              </svg>
              交易
            </NavButton>
            <NavButton>
              <svg width="36" height="38" viewBox="0 0 36 38" fill="none" stroke="#6e6e6e" strokeWidth="2.200">
                <path d="M24 3H5Q2 3 2 6V33Q2 36 5 36H30Q33 36 33 33V16" />
                <path d="M14 24L28 8M30 5L33 2" strokeWidth="4" />
              </svg>
              发帖
            </NavButton>
            <NavButton>
              <svg width="36" height="38" viewBox="0 0 36 38" fill="none" stroke="#6e6e6e" strokeWidth="2.200">
                <rect x="3" y="4" width="13" height="13" rx="2" />
                <rect x="3" y="22" width="13" height="13" rx="2" />
                <rect x="20" y="22" width="13" height="13" rx="2" />
                <path d="M26.500 2L34 10.500L26.500 19L19 10.500Z" />
              </svg>
              功能
            </NavButton>
            <NavButton>
              <svg width="36" height="38" viewBox="0 0 36 38" fill="none" stroke="#6e6e6e" strokeWidth="2.200">
                <circle cx="18" cy="19" r="16.500" />
                <path d="M9 19H12M16.500 19H19.500M24 19H27" strokeWidth="3" />
              </svg>
              设自选
            </NavButton>
          </BottomItems>
          <HomeBar />
        </BottomBar>

        <Doodle viewBox="0 0 768 1664" preserveAspectRatio="none" fill="none" stroke="#fe0000" strokeWidth="5" strokeLinecap="round" strokeLinejoin="round">
          {STROKES.map((d) => <path key={d} d={d} />)}
        </Doodle>
      </Page>
    </>
  );
}
